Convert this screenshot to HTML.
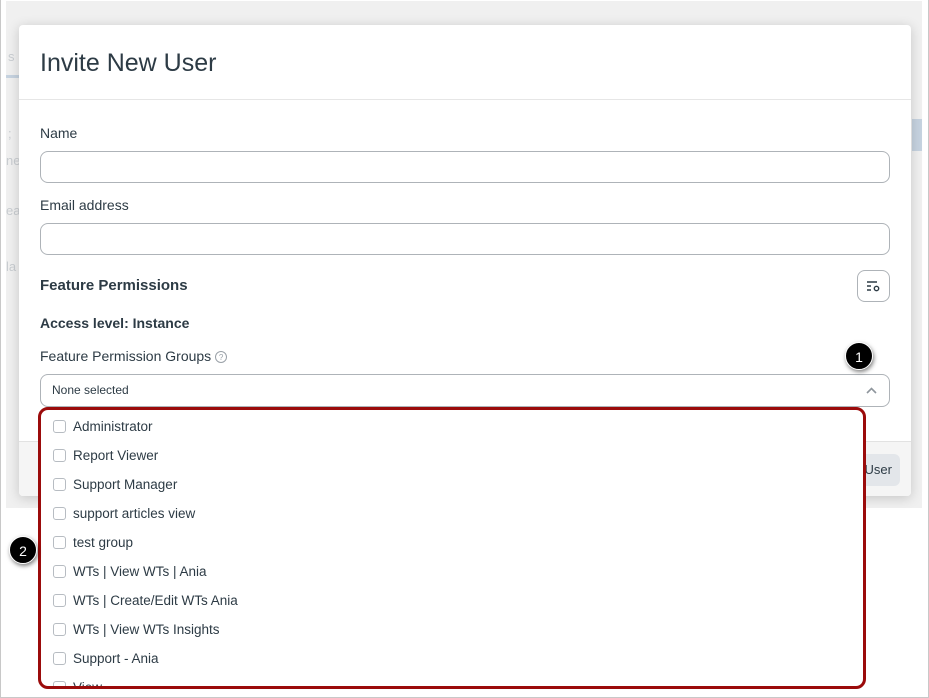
<!DOCTYPE html>
<html><head><style>
*{box-sizing:border-box;margin:0;padding:0}
body{width:929px;height:698px;background:#fff;position:relative;overflow:hidden;font-family:"Liberation Sans",sans-serif;color:#2d3b45}
.frame{position:absolute;left:0;top:0;width:929px;height:698px;border:1px solid #c8c8c8;border-top:none}
.bg{position:absolute;left:6px;top:1px;width:916px;height:507px;background:#f0f0f0}
.bgtxt{position:absolute;color:#c9cdd1;font-size:13px}
.modal{position:absolute;left:19px;top:25px;width:892px;height:471px;background:#fff;border-radius:4px;box-shadow:0 2px 12px rgba(0,0,0,.18);overflow:hidden}
.hdr{height:75px;border-bottom:1px solid #e6e6e6;padding:24px 21px}
.hdr h1{font-weight:normal;font-size:25px;color:#2d3b45}
.lbl{position:absolute;left:21px;font-size:14px;color:#2d3b45}
.inp{position:absolute;left:21px;width:850px;height:32px;border:1px solid #aeb3b8;border-radius:8px}
.footer{position:absolute;left:0;top:416px;width:892px;height:55px;background:#f5f5f5;border-top:1px solid #e2e2e2}
.btn{position:absolute;right:11px;top:12px;width:80px;height:32px;background:#e3e6ea;border-radius:6px;font-size:13px;line-height:32px;text-align:right;padding-right:8px}
.list{position:absolute;left:38px;top:407px;width:828px;height:282px;background:#fff;border:3px solid #9b0b0b;border-radius:10px;overflow:hidden}
.item{position:absolute;left:12px;font-size:13.5px;color:#2d3b45;display:flex;align-items:center}
.cb{width:13px;height:13px;border:1px solid #b7bcc2;border-radius:3px;margin-right:7px}
.badge{position:absolute;width:28px;height:28px;border-radius:50%;background:#000;color:#fff;font-size:14px;text-align:center;line-height:28px;box-shadow:1px 2px 4px rgba(0,0,0,.5);border:1.5px solid #fff}
</style></head><body>
<div class="bg">
<div class="bgtxt" style="left:2px;top:48px">s</div>
<div style="position:absolute;left:0;top:74px;width:13px;height:3px;background:#c6d3e0"></div>
<div class="bgtxt" style="left:2px;top:125px">;</div>
<div class="bgtxt" style="left:0;top:152px">ne</div>
<div class="bgtxt" style="left:0;top:202px">ea</div>
<div class="bgtxt" style="left:0;top:258px">la</div>
<div style="position:absolute;left:906px;top:118px;width:10px;height:32px;background:#c6d3e0"></div>
</div>
<div class="frame"></div>
<div class="modal">
<div class="hdr"><h1>Invite New User</h1></div>
<div class="lbl" style="top:100px">Name</div>
<div class="inp" style="top:126px"></div>
<div class="lbl" style="top:172px">Email address</div>
<div class="inp" style="top:198px"></div>
<div class="lbl" style="top:252px;font-weight:bold;font-size:15px">Feature Permissions</div>
<div style="position:absolute;left:838px;top:245px;width:33px;height:32px;border:1px solid #aeb3b8;border-radius:8px">
<svg width="31" height="30" viewBox="0 0 31 30"><path d="M9 11h10M9 15h4M9 19h4" stroke="#2d3b45" stroke-width="1.4"/><circle cx="18.5" cy="17.5" r="2.2" fill="none" stroke="#2d3b45" stroke-width="1.4"/></svg></div>
<div class="lbl" style="top:290px;font-weight:bold">Access level: Instance</div>
<div class="lbl" style="top:323px">Feature Permission Groups <span style="display:inline-block;width:12px;height:12px;border:1px solid #9aa1a8;border-radius:50%;font-size:8px;text-align:center;line-height:11px;color:#9aa1a8;vertical-align:1px">?</span></div>
<div class="inp" style="top:349px;height:33px;padding:8px 11px;font-size:12px">None selected<svg style="position:absolute;right:12px;top:12px" width="11" height="7"><path d="M1 6l4.5-4.5L10 6" stroke="#8f969d" stroke-width="1.6" fill="none"/></svg></div>
<div class="footer"><div class="btn">User</div></div>
</div>
<div class="list">
<div class="item" style="top:9px"><span class="cb"></span>Administrator</div>
<div class="item" style="top:38px"><span class="cb"></span>Report Viewer</div>
<div class="item" style="top:67px"><span class="cb"></span>Support Manager</div>
<div class="item" style="top:96px"><span class="cb"></span>support articles view</div>
<div class="item" style="top:125px"><span class="cb"></span>test group</div>
<div class="item" style="top:154px"><span class="cb"></span>WTs | View WTs | Ania</div>
<div class="item" style="top:183px"><span class="cb"></span>WTs | Create/Edit WTs Ania</div>
<div class="item" style="top:212px"><span class="cb"></span>WTs | View WTs Insights</div>
<div class="item" style="top:241px"><span class="cb"></span>Support - Ania</div>
<div class="item" style="top:270px"><span class="cb"></span>View ...</div>
</div>
<div class="badge" style="left:845px;top:342px">1</div>
<div class="badge" style="left:9px;top:536px">2</div>
</body></html>
